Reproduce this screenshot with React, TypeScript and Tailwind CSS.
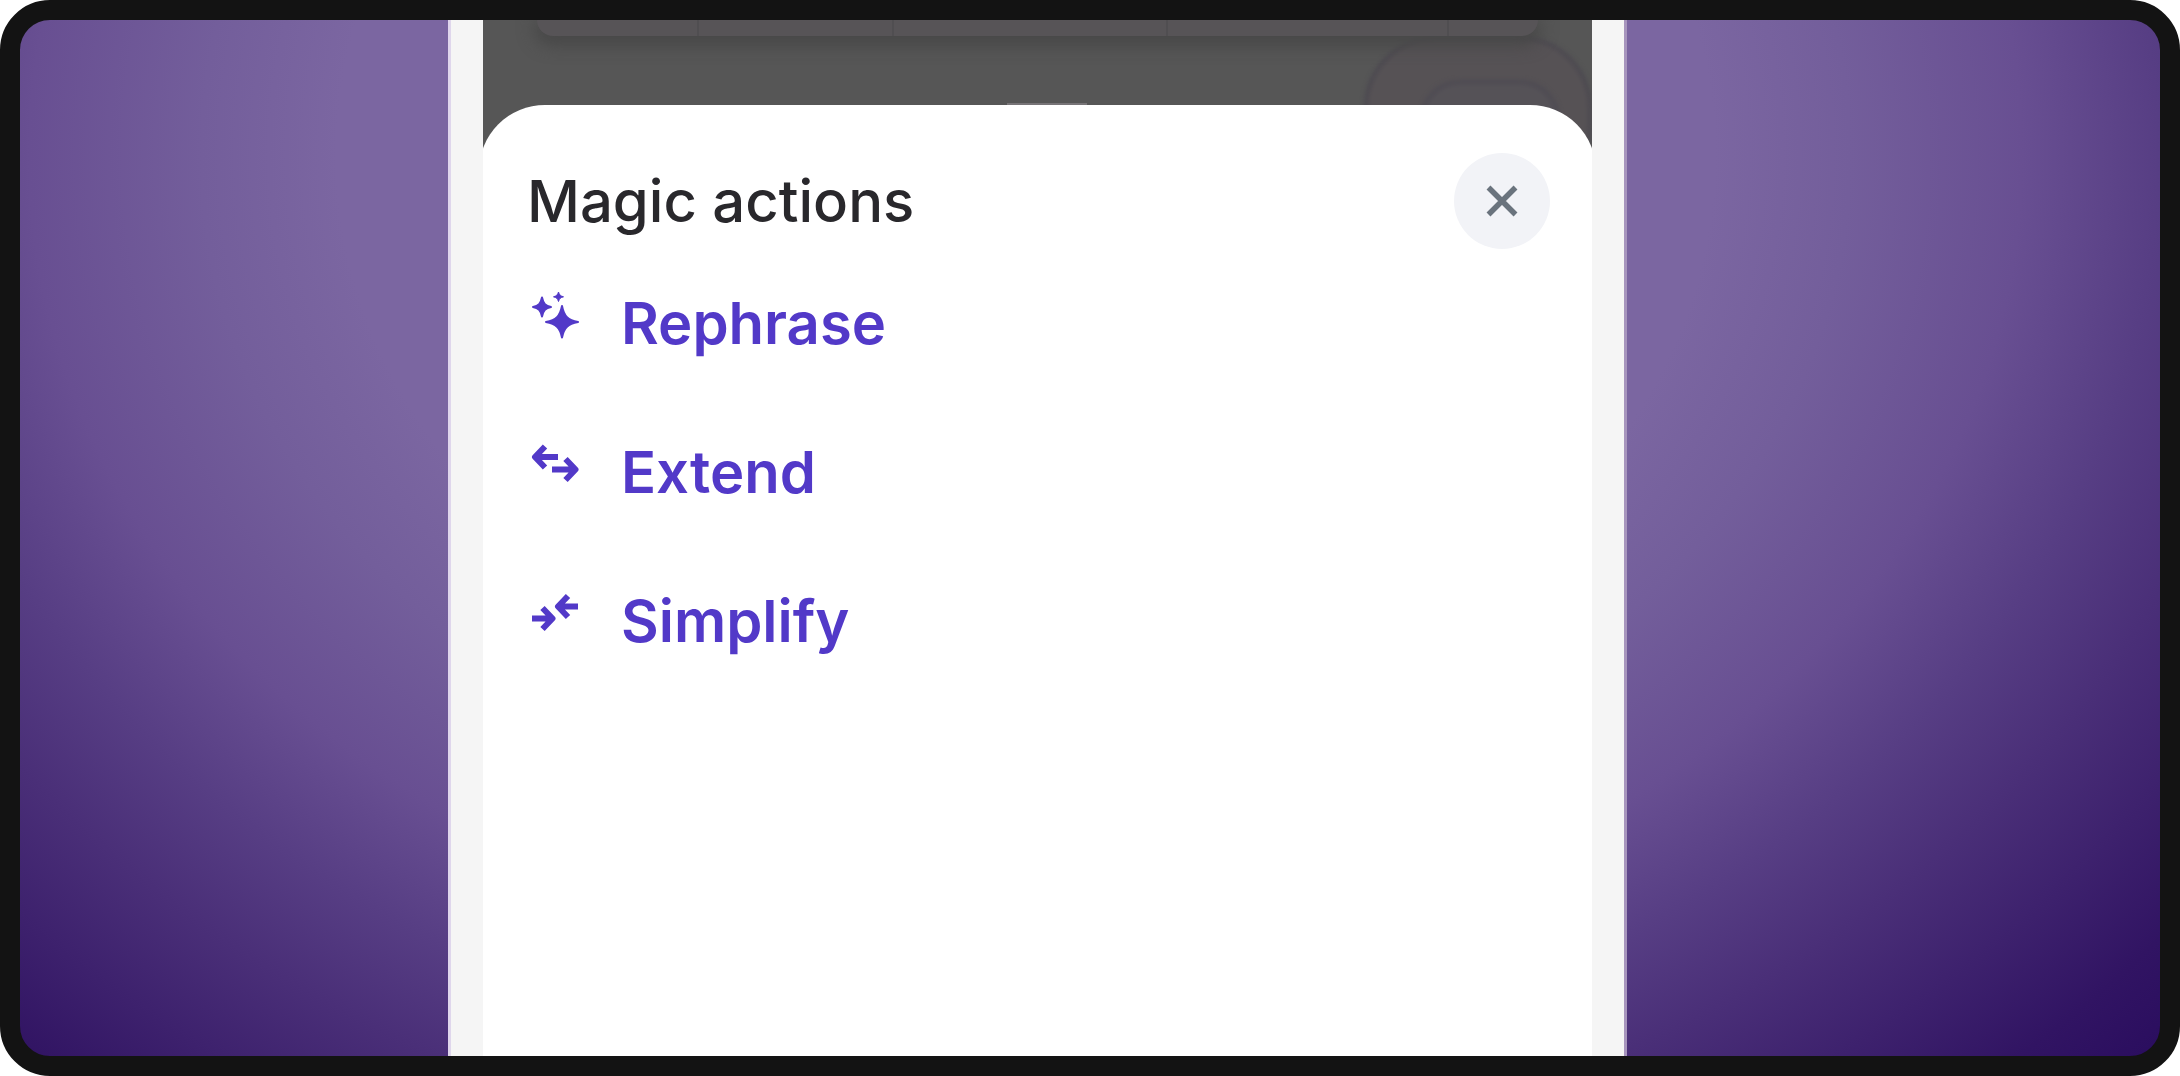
import type { ReactNode } from "react";

function SparklesIcon() {
  return (
    <svg viewBox="0 0 48 52" className="h-[52px] w-12 shrink-0" fill="currentColor" aria-hidden="true">
      <path d="M31 18 C33 28.500 37 32 47 34 C37 36 33 39.500 31 49.500 C29 39.500 25 36 15 34 C25 32 29 28.500 31 18Z" stroke="currentColor" strokeWidth="2" strokeLinejoin="round" />
      <path d="M11 9.500 C12.200 15.500 14.500 18 20 19 C14.500 20 12.200 22.500 11 28.500 C9.800 22.500 7.500 20 2 19 C7.500 18 9.800 15.500 11 9.500Z" stroke="currentColor" strokeWidth="2" strokeLinejoin="round" />
      <path d="M27.500 4 C28.400 7 29.400 7.900 32.500 8.800 C29.400 9.700 28.400 10.600 27.500 13.500 C26.600 10.600 25.600 9.700 22.500 8.800 C25.600 7.900 26.600 7 27.500 4Z" stroke="currentColor" strokeWidth="1" strokeLinejoin="round" />
    </svg>
  );
}

function ExtendIcon() {
  return (
    <svg viewBox="0 0 48 52" className="h-[52px] w-12 shrink-0" fill="none" stroke="currentColor" strokeWidth="6" strokeLinejoin="round" aria-hidden="true">
      <path d="M4 20H27M14 9.500L4 20L14 30.500" />
      <path d="M21 32.500H44M34.500 22L44.500 32.500L34.500 43" />
    </svg>
  );
}

function SimplifyIcon() {
  return (
    <svg viewBox="0 0 48 52" className="h-[52px] w-12 shrink-0" fill="none" stroke="currentColor" strokeWidth="6" strokeLinejoin="round" aria-hidden="true">
      <path d="M47 20.500H27.500M37 10L27 20.500L37 31" />
      <path d="M1 32.500H20M11.500 22L21.500 32.500L11.500 43" />
    </svg>
  );
}

function Action({ icon, label }: { icon: ReactNode; label: string }) {
  return (
    <li>
      <button type="button" className="flex items-start gap-[42px] text-left text-[58px] leading-[70px] font-semibold text-[#5239c8]">
        {icon}
        <span>{label}</span>
      </button>
    </li>
  );
}

function DimmedPage() {
  return (
    <div className="relative h-[85px]" aria-hidden="true">
      <div className="absolute top-4 right-0 h-40 w-[228px] rounded-[72px] border-4 border-[#4c4950] bg-[#565255] blur-[2px]" />
      <div className="absolute top-[60px] right-8 h-24 w-[140px] rounded-[40px] border-4 border-[#4e4b53] bg-[#555257] blur-[2px]" />
      <div className="relative mx-[54px] grid h-4 grid-cols-[162fr_194fr_273fr_280fr_89fr] divide-x-2 divide-[#504e51] rounded-b-3xl bg-[#575457] shadow-[0_6px_16px_4px_#484848]">
        <div />
        <div />
        <div />
        <div />
        <div />
      </div>
      <div className="absolute bottom-0 left-[524px] h-0.5 w-20 bg-[#777477]" />
    </div>
  );
}

export default function App() {
  return (
    <main className="flex min-h-screen bg-white font-['Inter',sans-serif]">
      <div className="grid flex-1 grid-cols-[428fr_1179fr_533fr] overflow-hidden rounded-[50px] border-20 border-[#131313] bg-[radial-gradient(1230px_1000px_at_47%_13%,#7b66a1_0%,#7b66a1_56%,#735e9b_67%,#684f92_81%,#573e84_92%,#4a2f78_102%,#311463_121%,#290c5e_130%)]">
        <section className="col-start-2 flex border-x-3 border-l-[#dfd6ec] border-r-[#a795bd] bg-[#f5f5f5] px-8">
          <div className="flex flex-1 flex-col overflow-hidden bg-[#565656]">
            <DimmedPage />
            <div role="dialog" aria-labelledby="sheet-title" className="relative -mx-1 flex-1 rounded-t-[66px] bg-white pt-12 pr-[46px] pl-12">
              <header className="flex items-center justify-between">
                <h1 id="sheet-title" className="text-[58px] leading-[70px] font-medium text-[#29282c]">
                  Magic actions
                </h1>
                <button type="button" aria-label="Close" className="flex size-24 items-center justify-center rounded-full bg-[#f2f3f7] text-[#6a737d]">
                  <svg viewBox="0 0 32 32" className="size-8" fill="none" stroke="currentColor" strokeWidth="5.500" aria-hidden="true">
                    <path d="M2.500 2.500L29.500 29.500M29.500 2.500L2.500 29.500" />
                  </svg>
                </button>
              </header>
              <ul className="mt-[39px] flex flex-col gap-[79px] px-1">
                <Action icon={<SparklesIcon />} label="Rephrase" />
                <Action icon={<ExtendIcon />} label="Extend" />
                <Action icon={<SimplifyIcon />} label="Simplify" />
              </ul>
            </div>
          </div>
        </section>
      </div>
    </main>
  );
}
